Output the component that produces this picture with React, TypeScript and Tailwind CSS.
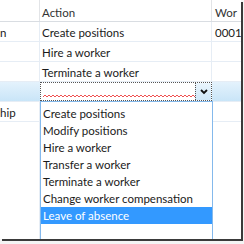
import React from "react";

const font = { fontFamily: 'Lato, "Open Sans", "Noto Sans", sans-serif' };

const rows = [
  { left: "n", action: "Create positions", work: "0001" },
  { left: "", action: "Hire a worker", work: "" },
  { left: "", action: "Terminate a worker", work: "" },
];

const options = [
  "Create positions",
  "Modify positions",
  "Hire a worker",
  "Transfer a worker",
  "Terminate a worker",
  "Change worker compensation",
  "Leave of absence",
];

function Squiggle() {
  // red spell-check wave under the empty combo text
  let d = "M0 2";
  for (let x = 0; x < 152; x += 4) {
    d += ` L${x + 2} 0 L${x + 4} 2`;
  }
  return (
    <svg width="152" height="3" className="block">
      <path d={d} fill="none" stroke="#f05050" strokeWidth="1" />
    </svg>
  );
}

function Row({ left, action, work }: { left: string; action: string; work: string }) {
  return (
    <div className="flex h-[20px] border-b border-[#e6edf5] text-[11.5px] text-[#1a1a1a]">
      <div className="w-[40px] border-r border-[#e6edf5] flex items-center pt-[2px] overflow-hidden whitespace-nowrap">
        {left}
      </div>
      <div className="w-[172px] border-r border-[#e6edf5] flex items-center pt-[2px] pl-[2px] overflow-hidden whitespace-nowrap">
        {action}
      </div>
      <div className="flex-1 flex items-center pt-[2px] pl-[3px] overflow-hidden whitespace-nowrap">{work}</div>
    </div>
  );
}

export default function App() {
  return (
    <div className="w-[244px] h-[244px] bg-[#f4f4f4] overflow-hidden" style={font}>
      <div className="relative w-[241px] h-[239px] bg-white shadow-[2px_2px_0_#3a3a3a] overflow-hidden">
        {/* header */}
        <div className="flex h-[22px] border-b border-[#d9dde2] text-[11.5px] text-[#333]">
          <div className="w-[40px] border-r border-[#e2e4e7]" />
          <div className="w-[172px] border-r border-[#e2e4e7] flex items-center pt-[5px] pl-[2px]">Action</div>
          <div className="flex-1 flex items-center pt-[5px] pl-[3px] overflow-hidden whitespace-nowrap">Wor</div>
        </div>

        {rows.map((r, i) => (
          <Row key={i} {...r} />
        ))}

        {/* editing row */}
        <div className="flex h-[20px] border-b border-[#e6edf5]">
          <div className="w-[40px] bg-gradient-to-b from-[#e4f2fc] to-[#c9e5f8]" />
          <div className="w-[172px] flex bg-white border border-dotted border-[#555]">
            <div className="flex-1 flex flex-col justify-end pb-[2px] pl-[2px]">
              <Squiggle />
            </div>
            <div className="w-[16px] border-l border-dotted border-[#555] bg-gradient-to-b from-[#eaf5fd] to-[#cfe8f9] flex items-center justify-center">
              <svg width="8" height="6" viewBox="0 0 8 6">
                <path d="M1 1 L4 4 L7 1" fill="none" stroke="#111" strokeWidth="1.8" />
              </svg>
            </div>
          </div>
          <div className="flex-1 bg-gradient-to-b from-[#e4f2fc] to-[#c9e5f8]" />
        </div>

        <Row left="hip" action="" work="" />

        <div className="flex h-[140px]">
          <div className="w-[40px] border-r border-[#e6edf5]" />
          <div className="w-[172px] border-r border-[#e6edf5]" />
          <div className="flex-1" />
        </div>

        {/* dropdown list */}
        <div className="absolute left-[40px] top-[101px] w-[173px] h-[150px] bg-white border border-[#84b9ec] pt-[3px] text-[11.5px] text-[#1a1a1a]">
          {options.map((o, i) => (
            <div
              key={o}
              className={
                i === options.length - 1
                  ? "h-[17px] flex items-center pl-[2px] pt-[1px] bg-[#3399ff] text-white whitespace-nowrap"
                  : "h-[17px] flex items-center pl-[2px] pt-[1px] whitespace-nowrap"
              }
            >
              {o}
            </div>
          ))}
        </div>
      </div>
    </div>
  );
}
